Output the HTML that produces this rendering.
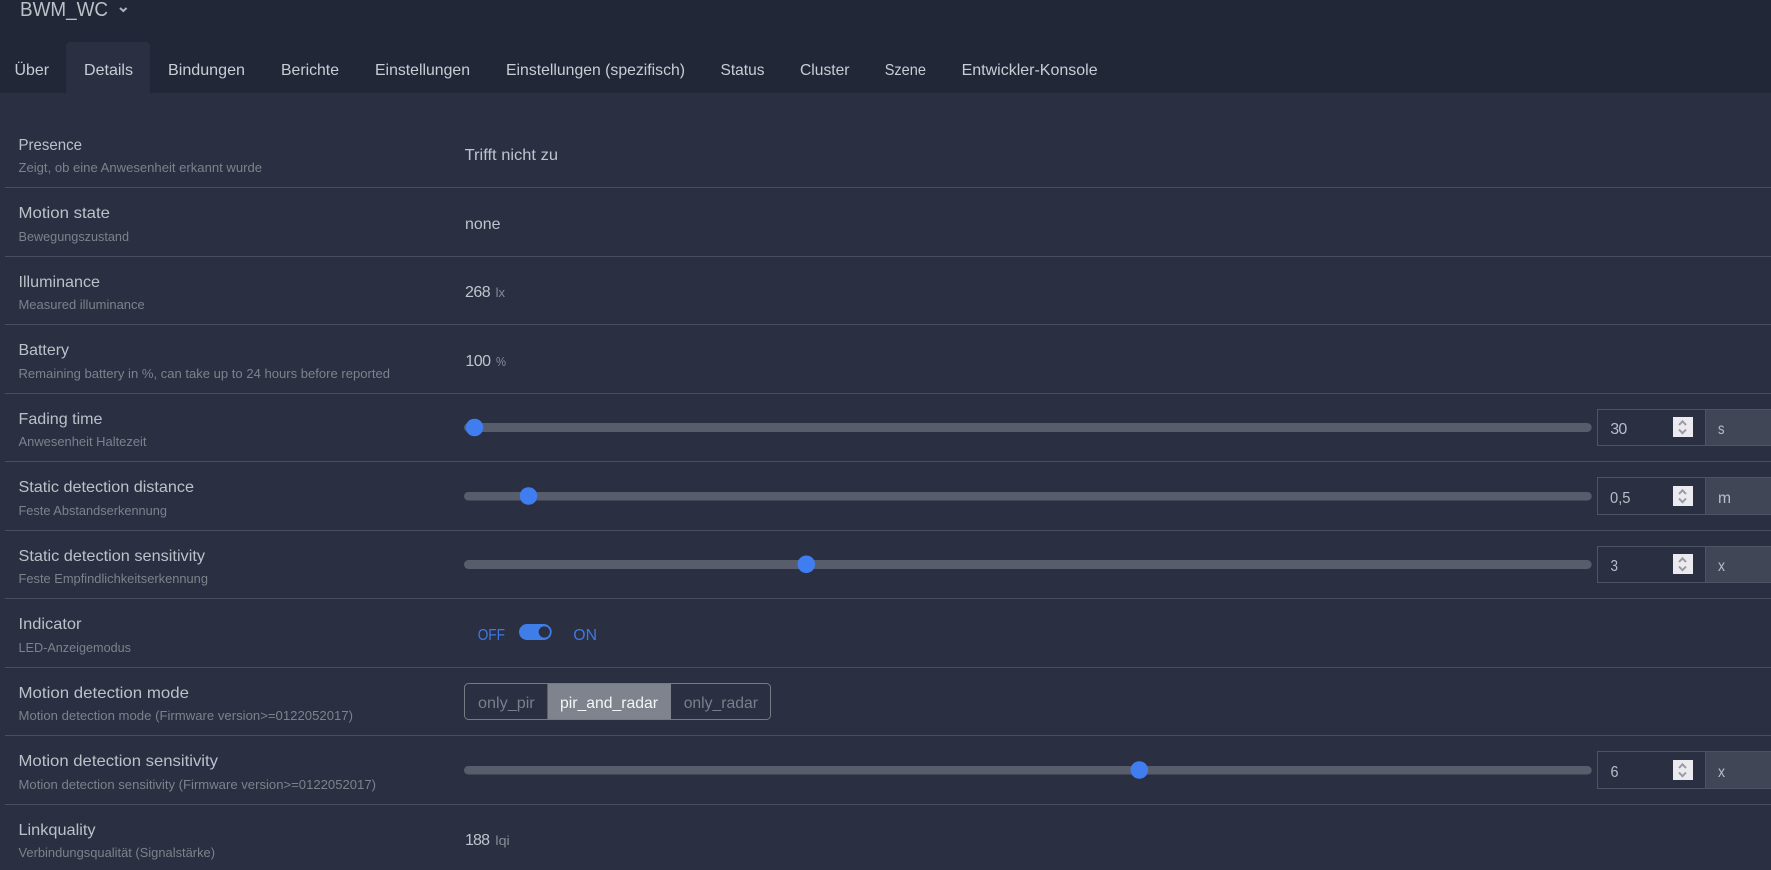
<!DOCTYPE html>
<html lang="de">
<head>
<meta charset="utf-8">
<title>BWM_WC</title>
<style>
html,body{margin:0;padding:0;width:1771px;height:870px;overflow:hidden;background:#2a2f41}
svg{display:block}
text{font-family:"Liberation Sans",sans-serif}
.tab{font-size:16px;fill:#c8ced5}
.t{font-size:16px;fill:#bcc1c9}
.s{font-size:13px;fill:#7d828b}
.v{font-size:16px;fill:#bfc4cc}
.u{font-size:13px;fill:#888d96}
.i{font-size:16px;fill:#b9bec8}
.l{stroke:#4a4f60;stroke-width:1}
.tr{fill:#575d6a}
.th{fill:#3f7df0}
.box{fill:#2a2f41;stroke:#4f5464;stroke-width:1}
.add{fill:#404655;stroke:#4f5464;stroke-width:1}
.sp{fill:#eaeaef}
.ch{fill:none;stroke:#9a9aa3;stroke-width:2}
.b{font-size:16px;fill:#7a7f89}
</style>
</head>
<body>
<svg width="1771" height="870" viewBox="0 0 1771 870" xmlns="http://www.w3.org/2000/svg">
<rect width="1771" height="870" fill="#2a2f41"/>
<rect width="1771" height="93" fill="#212736"/>
<path d="M66 93V46a4 4 0 0 1 4-4h76a4 4 0 0 1 4 4v47z" fill="#2a2f41"/>

<text x="20" y="16" font-size="20" fill="#bcc1c9" textLength="88" lengthAdjust="spacingAndGlyphs">BWM_WC</text>
<path d="M120 8l3.3 3 3.3-3" fill="none" stroke="#aeb3bb" stroke-width="2"/>

<text class="tab" x="14.5" y="75" textLength="34.5" lengthAdjust="spacingAndGlyphs">Über</text>
<text class="tab" x="84" y="75" textLength="49" lengthAdjust="spacingAndGlyphs">Details</text>
<text class="tab" x="168" y="75" textLength="77" lengthAdjust="spacingAndGlyphs">Bindungen</text>
<text class="tab" x="281" y="75" textLength="58" lengthAdjust="spacingAndGlyphs">Berichte</text>
<text class="tab" x="375" y="75" textLength="95" lengthAdjust="spacingAndGlyphs">Einstellungen</text>
<text class="tab" x="506" y="75" textLength="179" lengthAdjust="spacingAndGlyphs">Einstellungen (spezifisch)</text>
<text class="tab" x="720.5" y="75" textLength="44" lengthAdjust="spacingAndGlyphs">Status</text>
<text class="tab" x="800" y="75" textLength="49.5" lengthAdjust="spacingAndGlyphs">Cluster</text>
<text class="tab" x="884.7" y="75" textLength="41.3" lengthAdjust="spacingAndGlyphs">Szene</text>
<text class="tab" x="961.6" y="75" textLength="136" lengthAdjust="spacingAndGlyphs">Entwickler-Konsole</text>

<g>
<line class="l" x1="5" x2="1771" y1="187.5" y2="187.5"/>
<line class="l" x1="5" x2="1771" y1="256.5" y2="256.5"/>
<line class="l" x1="5" x2="1771" y1="324.5" y2="324.5"/>
<line class="l" x1="5" x2="1771" y1="393.5" y2="393.5"/>
<line class="l" x1="5" x2="1771" y1="461.5" y2="461.5"/>
<line class="l" x1="5" x2="1771" y1="530.5" y2="530.5"/>
<line class="l" x1="5" x2="1771" y1="598.5" y2="598.5"/>
<line class="l" x1="5" x2="1771" y1="667.5" y2="667.5"/>
<line class="l" x1="5" x2="1771" y1="735.5" y2="735.5"/>
<line class="l" x1="5" x2="1771" y1="804.5" y2="804.5"/>
</g>

<text class="t" x="18.5" y="150" textLength="63.5" lengthAdjust="spacingAndGlyphs">Presence</text>
<text class="s" x="18.5" y="172" textLength="243.5" lengthAdjust="spacingAndGlyphs">Zeigt, ob eine Anwesenheit erkannt wurde</text>
<text class="t" x="18.5" y="218" textLength="91.5" lengthAdjust="spacingAndGlyphs">Motion state</text>
<text class="s" x="18.5" y="241" textLength="110.5" lengthAdjust="spacingAndGlyphs">Bewegungszustand</text>
<text class="t" x="18.5" y="287" textLength="81.5" lengthAdjust="spacingAndGlyphs">Illuminance</text>
<text class="s" x="18.5" y="309" textLength="126.2" lengthAdjust="spacingAndGlyphs">Measured illuminance</text>
<text class="t" x="18.5" y="355" textLength="50.5" lengthAdjust="spacingAndGlyphs">Battery</text>
<text class="s" x="18.5" y="378" textLength="371.5" lengthAdjust="spacingAndGlyphs">Remaining battery in %, can take up to 24 hours before reported</text>
<text class="t" x="18.5" y="424" textLength="84" lengthAdjust="spacingAndGlyphs">Fading time</text>
<text class="s" x="18.5" y="446" textLength="128" lengthAdjust="spacingAndGlyphs">Anwesenheit Haltezeit</text>
<text class="t" x="18.5" y="492" textLength="175.5" lengthAdjust="spacingAndGlyphs">Static detection distance</text>
<text class="s" x="18.5" y="515" textLength="148.5" lengthAdjust="spacingAndGlyphs">Feste Abstandserkennung</text>
<text class="t" x="18.5" y="561" textLength="186.5" lengthAdjust="spacingAndGlyphs">Static detection sensitivity</text>
<text class="s" x="18.5" y="583" textLength="189.5" lengthAdjust="spacingAndGlyphs">Feste Empfindlichkeitserkennung</text>
<text class="t" x="18.5" y="629" textLength="63" lengthAdjust="spacingAndGlyphs">Indicator</text>
<text class="s" x="18.5" y="652" textLength="112.5" lengthAdjust="spacingAndGlyphs">LED-Anzeigemodus</text>
<text class="t" x="18.5" y="698" textLength="170.5" lengthAdjust="spacingAndGlyphs">Motion detection mode</text>
<text class="s" x="18.5" y="720" textLength="334.5" lengthAdjust="spacingAndGlyphs">Motion detection mode (Firmware version&gt;=0122052017)</text>
<text class="t" x="18.5" y="766" textLength="199.5" lengthAdjust="spacingAndGlyphs">Motion detection sensitivity</text>
<text class="s" x="18.5" y="789" textLength="357.5" lengthAdjust="spacingAndGlyphs">Motion detection sensitivity (Firmware version&gt;=0122052017)</text>
<text class="t" x="18.5" y="835" textLength="77" lengthAdjust="spacingAndGlyphs">Linkquality</text>
<text class="s" x="18.5" y="857" textLength="196.5" lengthAdjust="spacingAndGlyphs">Verbindungsqualität (Signalstärke)</text>

<text class="v" x="464.6" y="160" textLength="93.4" lengthAdjust="spacingAndGlyphs">Trifft nicht zu</text>
<text class="v" x="465" y="229" textLength="35.5" lengthAdjust="spacingAndGlyphs">none</text>
<text class="v" x="465" y="297" textLength="25.6">268</text>
<text class="u" x="495.6" y="297" textLength="9.4" lengthAdjust="spacingAndGlyphs">lx</text>
<text class="v" x="465.4" y="366" textLength="25.6">100</text>
<text class="u" x="496" y="366" textLength="10" lengthAdjust="spacingAndGlyphs">%</text>
<text class="v" x="465" y="845" textLength="25">188</text>
<text class="u" x="495.4" y="845" textLength="14.3" lengthAdjust="spacingAndGlyphs">lqi</text>

<rect class="tr" x="464" y="423" width="1127.7" height="9" rx="4.5"/>
<circle class="th" cx="474.5" cy="427.5" r="8.8"/>
<rect class="tr" x="464" y="492" width="1127.7" height="8.5" rx="4.2"/>
<circle class="th" cx="528.5" cy="496" r="8.8"/>
<rect class="tr" x="464" y="560" width="1127.7" height="9" rx="4.5"/>
<circle class="th" cx="806.3" cy="564.3" r="8.8"/>
<rect class="tr" x="464" y="766" width="1127.7" height="8.5" rx="4.2"/>
<circle class="th" cx="1139.3" cy="770" r="8.8"/>

<rect class="add" x="1705.5" y="409.5" width="70" height="36"/>
<rect class="box" x="1597.5" y="409.5" width="108" height="36"/>
<rect class="sp" x="1673" y="417" width="20" height="20"/>
<path class="ch" d="M1679 425l3.5-3.7 3.5 3.7M1679 429.5l3.5 3.7 3.5-3.7"/>
<text class="i" x="1610.3" y="434" textLength="17">30</text>
<text class="i" x="1718" y="434" textLength="6.5" lengthAdjust="spacingAndGlyphs">s</text>

<rect class="add" x="1705.5" y="477.5" width="70" height="37"/>
<rect class="box" x="1597.5" y="477.5" width="108" height="37"/>
<rect class="sp" x="1673" y="486" width="20" height="20"/>
<path class="ch" d="M1679 494l3.5-3.7 3.5 3.7M1679 498.5l3.5 3.7 3.5-3.7"/>
<text class="i" x="1610" y="503" textLength="20.5" lengthAdjust="spacingAndGlyphs">0,5</text>
<text class="i" x="1718" y="503" textLength="13" lengthAdjust="spacingAndGlyphs">m</text>

<rect class="add" x="1705.5" y="546.5" width="70" height="36"/>
<rect class="box" x="1597.5" y="546.5" width="108" height="36"/>
<rect class="sp" x="1673" y="554" width="20" height="20"/>
<path class="ch" d="M1679 562l3.5-3.7 3.5 3.7M1679 566.5l3.5 3.7 3.5-3.7"/>
<text class="i" x="1610.5" y="571" textLength="7.5" lengthAdjust="spacingAndGlyphs">3</text>
<text class="i" x="1718" y="571" textLength="7" lengthAdjust="spacingAndGlyphs">x</text>

<rect class="add" x="1705.5" y="751.5" width="70" height="37"/>
<rect class="box" x="1597.5" y="751.5" width="108" height="37"/>
<rect class="sp" x="1673" y="760" width="20" height="20"/>
<path class="ch" d="M1679 768l3.5-3.7 3.5 3.7M1679 772.5l3.5 3.7 3.5-3.7"/>
<text class="i" x="1610.5" y="777" textLength="8" lengthAdjust="spacingAndGlyphs">6</text>
<text class="i" x="1718" y="777" textLength="7" lengthAdjust="spacingAndGlyphs">x</text>

<text x="477.7" y="640" font-size="16" fill="#3e78e2" textLength="27.3" lengthAdjust="spacingAndGlyphs">OFF</text>
<rect x="519" y="624" width="32.7" height="16" rx="8" fill="#3f7de8"/>
<circle cx="544.3" cy="632" r="5.6" fill="#2a2f41"/>
<text x="573.3" y="640" font-size="16" fill="#3e78e2" textLength="23.7" lengthAdjust="spacingAndGlyphs">ON</text>

<rect x="547.4" y="683.5" width="123.6" height="36" fill="#7f838d"/>
<rect x="464.5" y="683.5" width="306" height="36" rx="4" fill="none" stroke="#767a85" stroke-width="1"/>
<text class="b" x="478" y="708" textLength="56.7" lengthAdjust="spacingAndGlyphs">only_pir</text>
<text x="560" y="708" font-size="16" fill="#f4f5f6" textLength="98" lengthAdjust="spacingAndGlyphs">pir_and_radar</text>
<text class="b" x="683.7" y="708" textLength="74.3" lengthAdjust="spacingAndGlyphs">only_radar</text>
</svg>
</body>
</html>
